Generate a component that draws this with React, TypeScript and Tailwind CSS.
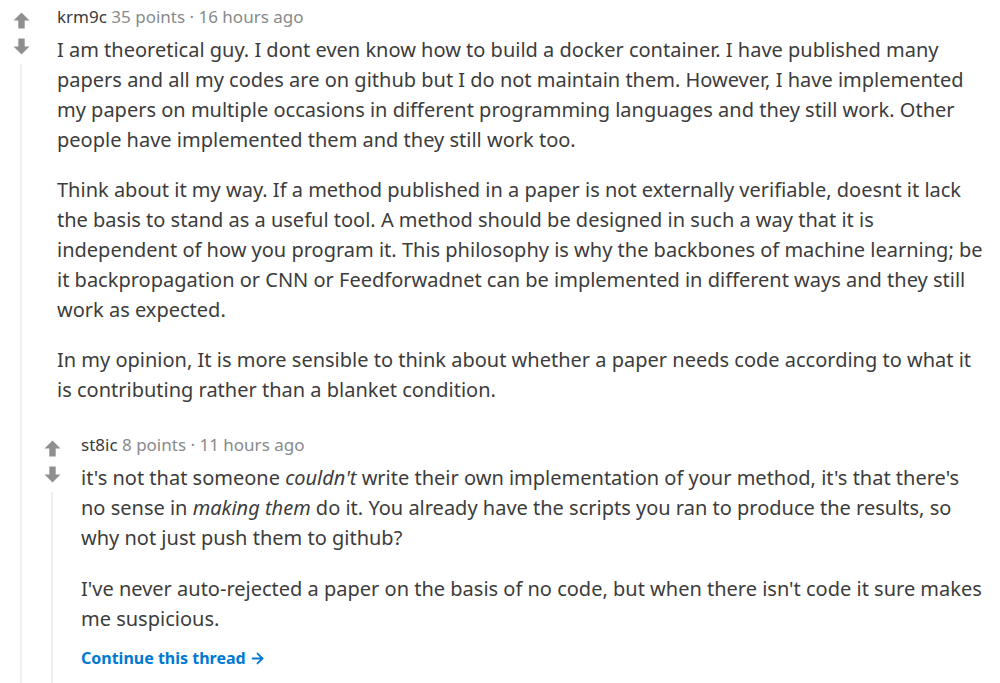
import React from "react";
import { ArrowRight } from "lucide-react";

const UpArrow = () => (
  <svg width="17" height="17" viewBox="0 0 16 16" className="text-[#8f8f8f]">
    <path d="M8 0.5 L15.5 8 H11 V15.5 H5 V8 H0.5 Z" fill="currentColor" />
  </svg>
);

const DownArrow = () => (
  <svg width="17" height="17" viewBox="0 0 16 16" className="text-[#8f8f8f]">
    <path d="M8 15.5 L15.5 8 H11 V0.5 H5 V8 H0.5 Z" fill="currentColor" />
  </svg>
);

const Votes = () => (
  <div className="w-[32px] flex flex-col items-center shrink-0">
    <div className="mt-[7px]">
      <UpArrow />
    </div>
    <div className="mt-[9px]">
      <DownArrow />
    </div>
    <div className="mt-[9px] w-[2px] flex-1 bg-[#edeff1]" />
  </div>
);

const Meta = ({ user, points, time }: { user: string; points: string; time: string }) => (
  <div className="text-[17px] leading-[24px] text-[#878a8c]">
    <span className="text-[#3a3a3a]">{user}</span> {points} · {time}
  </div>
);

export default function App() {
  return (
    <div className="w-[1000px] h-[683px] overflow-hidden bg-white font-['Noto_Sans',sans-serif] text-[#3c3c3c]">
      <div className="flex pl-[5px] pt-[5px] h-full">
        <Votes />
        <div className="ml-[20px] flex-1 pr-[4px]">
          <Meta user="krm9c" points="35 points" time="16 hours ago" />
          <div className="mt-[6px] text-[20px] leading-[30px]">
            <p className="mb-[20px]">
              I am theoretical guy. I dont even know how to build a docker container. I have published many
              <br />
              papers and all my codes are on github but I do not maintain them. However, I have implemented
              <br />
              my papers on multiple occasions in different programming languages and they still work. Other
              <br />
              people have implemented them and they still work too.
            </p>
            <p className="mb-[20px]">
              Think about it my way. If a method published in a paper is not externally verifiable, doesnt it lack
              <br />
              the basis to stand as a useful tool. A method should be designed in such a way that it is
              <br />
              independent of how you program it. This philosophy is why the backbones of machine learning; be
              <br />
              it backpropagation or CNN or Feedforwadnet can be implemented in different ways and they still
              <br />
              work as expected.
            </p>
            <p>
              In my opinion, It is more sensible to think about whether a paper needs code according to what it
              <br />
              is contributing rather than a blanket condition.
            </p>
          </div>

          {/* reply */}
          <div className="flex ml-[-21px] mt-[28px] h-[320px]">
            <Votes />
            <div className="ml-[13px] flex-1">
              <Meta user="st8ic" points="8 points" time="11 hours ago" />
              <div className="mt-[6px] text-[20px] leading-[30px]">
                <p className="mb-[21px]">
                  it's not that someone <em>couldn't</em> write their own implementation of your method, it's that there's
                  <br />
                  no sense in <em>making them</em> do it. You already have the scripts you ran to produce the results, so
                  <br />
                  why not just push them to github?
                </p>
                <p>
                  I've never auto-rejected a paper on the basis of no code, but when there isn't code it sure makes
                  <br />
                  me suspicious.
                </p>
              </div>
              <a href="#" className="mt-[12px] inline-flex items-center gap-[3px] text-[16px] leading-[24px] font-bold text-[#0079d3]">
                Continue this thread
                <ArrowRight size={17} strokeWidth={2.5} />
              </a>
            </div>
          </div>
        </div>
      </div>
    </div>
  );
}
